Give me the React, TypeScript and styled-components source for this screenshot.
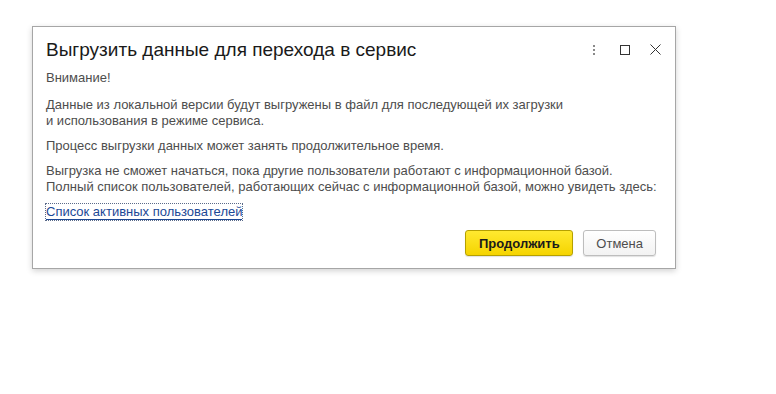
import React from 'react';
import styled, { createGlobalStyle } from 'styled-components';

const GlobalStyle = createGlobalStyle`
  html, body {
    margin: 0;
    padding: 0;
    background: #ffffff;
    font-family: Arial, 'Liberation Sans', sans-serif;
  }
`;

const Page = styled.div`
  width: 776px;
  height: 394px;
  padding: 26px 0 0 32px;
  box-sizing: border-box;
`;

const Dialog = styled.div`
  width: 644px;
  height: 243px;
  box-sizing: border-box;
  border: 1px solid #a6a6a6;
  background: #fff;
  box-shadow: 0 2px 6px rgba(0, 0, 0, 0.18);
  display: flex;
  flex-direction: column;
  padding: 0 19px 0 13px;
`;

const Header = styled.div`
  display: flex;
  align-items: center;
  height: 41px;
  padding-top: 2px;
  margin-right: -15px;
`;

const Title = styled.h1`
  flex: 1;
  margin: 0;
  font-size: 19px;
  font-weight: normal;
  color: #1a1a1a;
  white-space: nowrap;
`;

const Tools = styled.div`
  display: flex;
  align-items: center;
`;

const ToolBtn = styled.div`
  width: 31px;
  height: 18px;
  display: flex;
  align-items: center;
  justify-content: center;
`;

const Body = styled.div`
  font-size: 13px;
  color: #4d4d4d;
  line-height: 16px;
  display: flex;
  flex-direction: column;
  gap: 9px;
`;

const Para = styled.p<{ $lead?: boolean }>`
  margin: 0 0 ${({ $lead }) => ($lead ? '2px' : '0')};
  white-space: nowrap;
`;

const Link = styled.a`
  align-self: flex-start;
  color: #1c4896;
  text-decoration: none;
  border-bottom: 1px solid #1c4896;
  outline: 1px dotted #5a6a8a;
  line-height: 15px;
  cursor: pointer;
`;

const Footer = styled.div`
  display: flex;
  justify-content: flex-end;
  gap: 10px;
  margin-top: auto;
  padding-bottom: 12px;
`;

const Button = styled.button<{ $primary?: boolean }>`
  height: 26px;
  min-width: ${({ $primary }) => ($primary ? '108px' : '0')};
  box-sizing: border-box;
  border-radius: 3px;
  font-family: Arial, 'Liberation Sans', sans-serif;
  font-size: 13px;
  padding: 0 12px;
  cursor: pointer;
  border: 1px solid ${({ $primary }) => ($primary ? '#b5a000' : '#bdbdbd')};
  background: ${({ $primary }) =>
    $primary ? 'linear-gradient(#ffe930, #f5d400)' : 'linear-gradient(#ffffff, #f2f2f2)'};
  color: ${({ $primary }) => ($primary ? '#1a1a1a' : '#4d4d4d')};
  font-weight: ${({ $primary }) => ($primary ? 'bold' : 'normal')};
  box-shadow: 0 1px 1px rgba(0, 0, 0, 0.12);
`;

export default function App() {
  return (
    <Page>
      <GlobalStyle />
      <Dialog>
        <Header>
          <Title>Выгрузить данные для перехода в сервис</Title>
          <Tools>
            <ToolBtn>
              <svg width="2" height="10" viewBox="0 0 2 10">
                <rect x="0" y="0" width="2" height="2" fill="#8a8a8a" />
                <rect x="0" y="4" width="2" height="2" fill="#8a8a8a" />
                <rect x="0" y="8" width="2" height="2" fill="#8a8a8a" />
              </svg>
            </ToolBtn>
            <ToolBtn>
              <svg width="10" height="10" viewBox="0 0 10 10">
                <rect x="0.5" y="0.5" width="9" height="9" fill="none" stroke="#333" />
              </svg>
            </ToolBtn>
            <ToolBtn>
              <svg width="11" height="11" viewBox="0 0 11 11">
                <path d="M0.5 0.5 L10.5 10.5 M10.5 0.5 L0.5 10.5" stroke="#333" strokeWidth="1" />
              </svg>
            </ToolBtn>
          </Tools>
        </Header>
        <Body>
          <Para $lead>Внимание!</Para>
          <Para>
            Данные из локальной версии будут выгружены в файл для последующей их загрузки
            <br />и использования в режиме сервиса.
          </Para>
          <Para>Процесс выгрузки данных может занять продолжительное время.</Para>
          <Para>
            Выгрузка не сможет начаться, пока другие пользователи работают с информационной базой.
            <br />
            Полный список пользователей, работающих сейчас с информационной базой, можно увидеть здесь:
          </Para>
          <Link>Список активных пользователей</Link>
        </Body>
        <Footer>
          <Button $primary>Продолжить</Button>
          <Button>Отмена</Button>
        </Footer>
      </Dialog>
    </Page>
  );
}
